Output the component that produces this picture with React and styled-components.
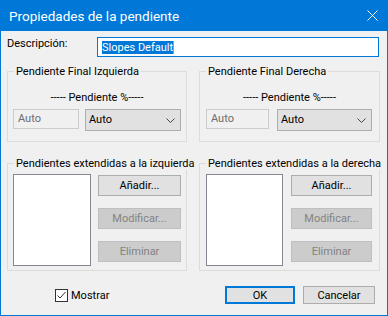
import React from 'react';
import styled, { createGlobalStyle } from 'styled-components';

const Global = createGlobalStyle`
  html, body { margin: 0; padding: 0; background: #f0f0f0; }
  body {
    font-family: Roboto, "Liberation Sans", Arial, sans-serif;
    font-size: 11px;
    color: #000;
  }
  * { box-sizing: border-box; }
`;

const Window = styled.div`
  width: 388px;
  height: 316px;
  border: 1px solid #0078d7;
  border-top: 0;
  background: #f0f0f0;
  display: flex;
  flex-direction: column;
`;

const TitleBar = styled.div`
  height: 31px;
  flex: none;
  background: #0078d7;
  color: #fff;
  display: flex;
  align-items: center;
  padding-left: 8px;
  padding-right: 9px;
`;

const Title = styled.span`
  font-size: 13.5px;
  line-height: 16px;
  white-space: nowrap;
`;

const CloseIcon = styled.svg`
  margin-left: auto;
  display: block;
`;

const Body = styled.div`
  flex: 1;
  display: flex;
  flex-direction: column;
  padding: 6px 7px 0 6px;
`;

const DescRow = styled.div`
  display: flex;
  align-items: flex-start;
  height: 20px;
`;

const DescLabel = styled.span`
  width: 90px;
  line-height: 13px;
`;

const TextInput = styled.div`
  width: 282px;
  height: 20px;
  border: 1px solid #0078d7;
  background: #fff;
  display: flex;
  align-items: center;
  padding-left: 4px;
`;

const Selection = styled.span`
  display: inline-block;
  height: 13px;
  line-height: 13px;
  background: #0078d7;
  color: #fff;
  white-space: nowrap;
`;

const Caret = styled.span`
  display: inline-block;
  width: 1px;
  height: 13px;
  background: #ff8728;
`;

const GroupGrid = styled.div`
  display: grid;
  grid-template-columns: 180px 181px;
  column-gap: 12px;
  margin-top: ${p => p.$mt}px;
`;

const Group = styled.div`
  position: relative;
  border: 1px solid #dcdcdc;
  height: ${p => p.$h}px;
  padding: ${p => p.$pad};
`;

const Legend = styled.span`
  position: absolute;
  top: -7px;
  left: 6px;
  padding: 0 2px;
  background: #f0f0f0;
  line-height: 13px;
  white-space: nowrap;
`;

const PctText = styled.div`
  text-align: center;
  line-height: 13px;
`;

const ControlRow = styled.div`
  display: flex;
  align-items: flex-start;
  gap: ${p => p.$gap}px;
  margin-top: 5px;
`;

const DisabledBox = styled.div`
  width: ${p => p.$w}px;
  height: 20px;
  border: 1px solid #cccccc;
  background: #f0f0f0;
  color: #6d6d6d;
  padding-left: 4px;
  line-height: 18px;
`;

const Combo = styled.div`
  width: ${p => p.$w}px;
  height: 22px;
  border: 1px solid #adadad;
  background: #e1e1e1;
  padding-left: 3px;
  padding-right: 5px;
  line-height: 20px;
  display: flex;
  align-items: center;
  justify-content: space-between;
`;

const ListRow = styled.div`
  display: flex;
  align-items: flex-start;
  gap: ${p => p.$gap}px;
`;

const ListBox = styled.div`
  width: ${p => p.$w}px;
  height: 92px;
  border: 1px solid #828790;
  background: #fff;
`;

const ButtonCol = styled.div`
  display: flex;
  flex-direction: column;
  gap: 12px;
  margin-top: 1px;
`;

const Button = styled.div`
  width: ${p => p.$w}px;
  height: ${p => p.$h || 21}px;
  border: ${p => (p.$default ? '2px solid #0078d7' : p.$disabled ? '1px solid #bfbfbf' : '1px solid #adadad')};
  background: ${p => (p.$disabled ? '#cccccc' : '#e1e1e1')};
  color: ${p => (p.$disabled ? '#838383' : '#000')};
  display: flex;
  align-items: center;
  justify-content: center;
  white-space: nowrap;
`;

const BottomRow = styled.div`
  display: flex;
  align-items: center;
  margin-top: 15px;
  padding-left: 48px;
  padding-right: 5px;
  height: 18px;
`;

const CheckWrap = styled.div`
  display: flex;
  align-items: center;
  gap: 3px;
`;

const CheckBox = styled.div`
  width: 13px;
  height: 13px;
  border: 1px solid #333;
  background: #fff;
  display: flex;
  align-items: center;
  justify-content: center;
`;

const ButtonGroup = styled.div`
  margin-left: auto;
  display: flex;
  gap: 8px;
`;

const Chevron = () => (
  <svg width="9" height="5" viewBox="0 0 9 5">
    <path d="M0.5 0.5 L4.5 4.5 L8.5 0.5" fill="none" stroke="#444" strokeWidth="1" />
  </svg>
);

const EndGroup = ({ title, pad, gap, boxW, comboW }) => (
  <Group $h={71} $pad={pad}>
    <Legend>{title}</Legend>
    <PctText>----- Pendiente %-----</PctText>
    <ControlRow $gap={gap}>
      <DisabledBox $w={boxW}>Auto</DisabledBox>
      <Combo $w={comboW}>
        <span>Auto</span>
        <Chevron />
      </Combo>
    </ControlRow>
  </Group>
);

const ExtGroup = ({ title, pad, gap, listW, btnW }) => (
  <Group $h={108} $pad={pad}>
    <Legend>{title}</Legend>
    <ListRow $gap={gap}>
      <ListBox $w={listW} />
      <ButtonCol>
        <Button $w={btnW}>Añadir...</Button>
        <Button $w={btnW} $disabled>Modificar...</Button>
        <Button $w={btnW} $disabled>Eliminar</Button>
      </ButtonCol>
    </ListRow>
  </Group>
);

export default function App() {
  return (
    <>
      <Global />
      <Window>
        <TitleBar>
          <Title>Propiedades de la pendiente</Title>
          <CloseIcon width="11" height="11" viewBox="0 0 11 11">
            <path d="M0.5 0.5 L10.5 10.5 M10.5 0.5 L0.5 10.5" stroke="#fff" strokeWidth="1" />
          </CloseIcon>
        </TitleBar>
        <Body>
          <DescRow>
            <DescLabel>Descripción:</DescLabel>
            <TextInput>
              <Selection>Slopes Default</Selection>
              <Caret />
            </TextInput>
          </DescRow>
          <GroupGrid $mt={14}>
            <EndGroup title="Pendiente Final Izquierda" pad="19px 5px 0 5px" gap={6} boxW={66} comboW={96} />
            <EndGroup title="Pendiente Final Derecha" pad="19px 6px 0 6px" gap={8} boxW={63} comboW={95} />
          </GroupGrid>
          <GroupGrid $mt={21}>
            <ExtGroup title="Pendientes extendidas a la izquierda" pad="10px 5px 0 5px" gap={7} listW={78} btnW={83} />
            <ExtGroup title="Pendientes extendidas a la derecha" pad="10px 6px 0 6px" gap={8} listW={77} btnW={81} />
          </GroupGrid>
          <BottomRow>
            <CheckWrap>
              <CheckBox>
                <svg width="11" height="11" viewBox="0 0 11 11">
                  <path d="M1.5 5.5 L4 8 L9.5 2" fill="none" stroke="#333" strokeWidth="1" />
                </svg>
              </CheckBox>
              <span>Mostrar</span>
            </CheckWrap>
            <ButtonGroup>
              <Button $w={70} $h={18} $default>OK</Button>
              <Button $w={72} $h={18}>Cancelar</Button>
            </ButtonGroup>
          </BottomRow>
        </Body>
      </Window>
    </>
  );
}
